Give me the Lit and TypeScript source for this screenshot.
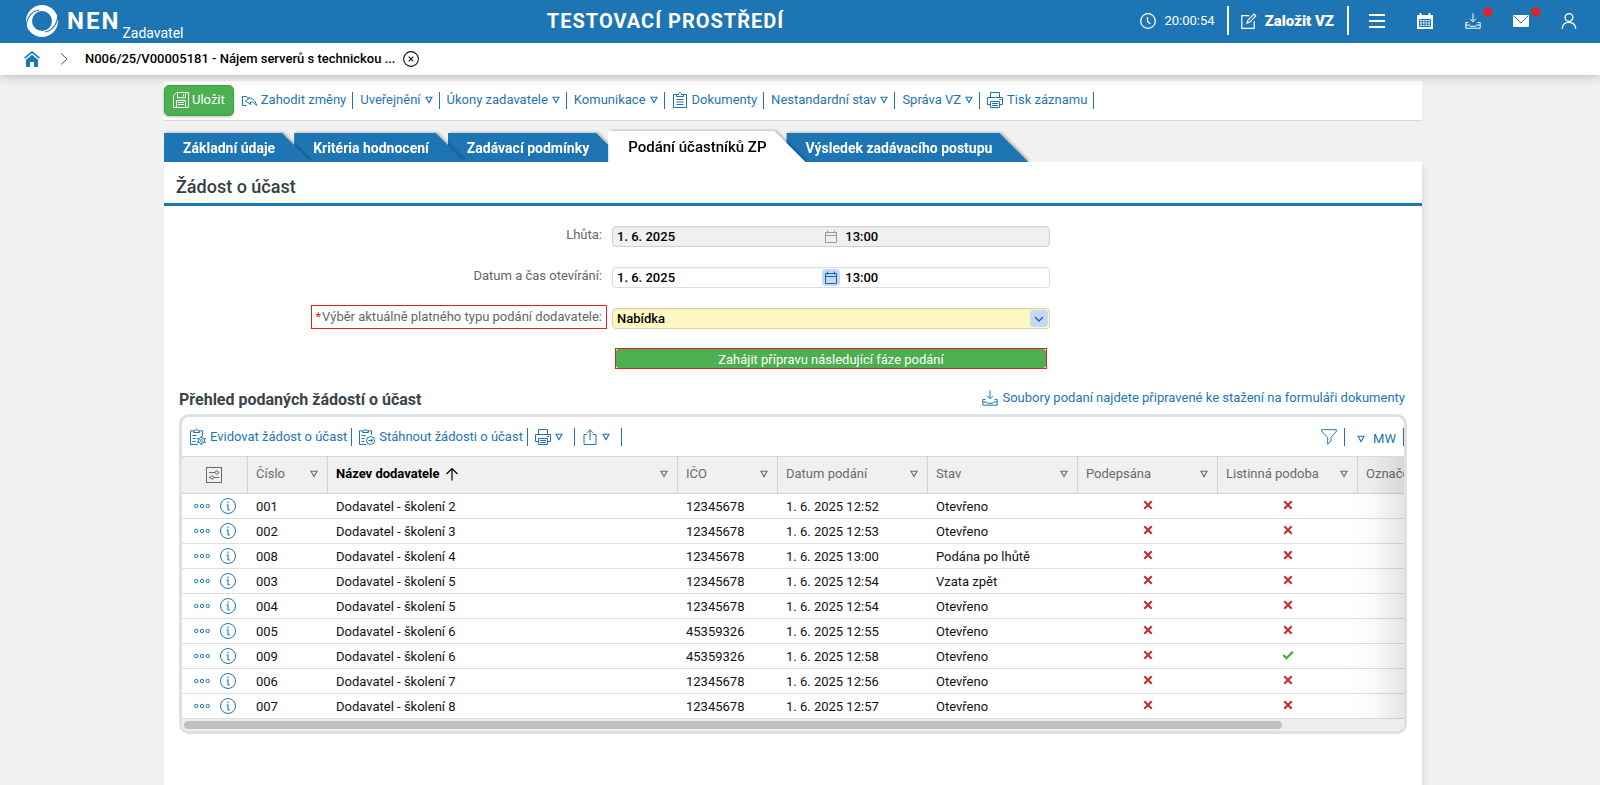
import { LitElement, html, css, svg, nothing } from "lit";
import { customElement } from "lit/decorators.js";
import { classMap } from "lit/directives/class-map.js";

const stroke = (body: unknown, cls = "icon") =>
  html`<svg class=${cls} viewBox="0 0 16 16" fill="none" stroke="currentColor" stroke-width="1" aria-hidden="true">${body}</svg>`;

const icons = {
  clock: svg`<circle cx="8" cy="8" r="7.3" stroke-width="1.3"/><path d="M7.5 4v4.2l2.8 2.9" stroke-width="1.3"/>`,
  edit: svg`<path d="M8.5 2.7H.8v12.6h12.4V8M6 10.3l.9-3.1L13 1.100l1.900 1.900-6.100 6.100z" stroke-width="1.2"/>`,
  menu: svg`<path d="M0 2h16M0 8h16M0 14h16" stroke-width="2.2"/>`,
  calendarFull: svg`<path d="M0 2h16v14H0z" fill="currentColor" stroke="none"/><path d="M3.500 0v4M12.500 0v4" stroke-width="2"/><path d="M2.500 6.500h11v7h-11zM2.500 8.800h11M2.500 11.200h11M5.300 6.500v7M8 6.500v7M10.700 6.500v7" stroke="#1e75b4"/>`,
  download: svg`<path d="M8 .5v8M5 5.800l3 3 3-3M3.500 9.500H.8v5.700h14.400V9.500h-2.700M1 12h3.500l1 1.300h5l1-1.300H15"/>`,
  mail: svg`<rect x="0" y="2" width="16" height="12" rx="1" fill="currentColor" stroke="none"/><path d="M1 3l7 7 7-7" stroke="#1e75b4"/>`,
  user: svg`<circle cx="8" cy="4.500" r="3.900" stroke-width="1.300"/><path d="M1.300 16c0-4 2.500-6.600 6.700-6.600s6.700 2.600 6.700 6.600" stroke-width="1.300"/>`,
  home: svg`<path d="M8 3.800l6 5V16h-4v-5H6v5H2V8.800z" fill="currentColor" stroke="none"/><path d="M.6 7.200L8 1.200l7.400 6" stroke-width="1.700"/>`,
  chevron: svg`<path d="M5 2.500l6 5.500-6 5.500"/>`,
  close: svg`<circle cx="8" cy="8" r="7.400" stroke-width="1.100"/><path d="M5.700 5.700l4.600 4.600M10.300 5.700l-4.600 4.600" stroke-width="1.100"/>`,
  save: svg`<path d="M3.500.5h12v15H.5V3.500zM4.500.8v5h8v-5M10.500 2v2.500M3.500 15.500v-7h9v7M5 10.500h6M5 12.500h6"/>`,
  undo: svg`<path d="M1.500 13.500h4M1.500 13.500V4.500h3.800l1 1.500c4.500-.7 8 2 9.200 7.500-1.500-2.500-3.600-3.800-6-3.500v2.500L4.500 8.800 8.500 6"/>`,
  clipboard: svg`<path d="M4.500 2.500h-3v13h13v-13h-3M4.500 4.500v-2h2c0-2.400 3-2.400 3 0h2v2zM4.500 7.500h7M4.500 10h7M4.500 12.500h7"/>`,
  printer: svg`<path d="M3.500 5V.5h9V5M3.500 12.500h-3v-7h15v7h-3M3.500 9.500h9v6h-9zM5 11.500h6M5 13.500h6M12 7.500h2"/>`,
  clipGear: svg`<path d="M3.500 1.800H.5v13.700h7M9.500 1.800h3v5M3.500 3.500V1.800h1.700C5.200-.2 7.900-.2 7.900 1.800h1.600v1.700zM2.500 6.500h4M2.500 9.500h3M2.500 12.500h3"/><circle cx="11.500" cy="11.500" r="3"/><circle cx="11.500" cy="11.500" r="1"/><path d="M11.500 7v1.500M11.500 14.500V16M7.300 9.300l1.500.8M14.200 12.900l1.500.8M7.300 13.700l1.500-.8M14.200 10.100l1.500-.8" stroke-width="1.400"/>`,
  clipArrow: svg`<path d="M3.500 1.800H.5v13.700h7M9.500 1.800h3v4M3.500 3.500V1.800h1.700C5.200-.2 7.900-.2 7.900 1.800h1.600v1.700zM2.500 6.500h4M2.500 9.500h3M2.500 12.500h3"/><circle cx="11.500" cy="11.500" r="4"/><path d="M9.300 11.500h4M11.800 9.700l1.800 1.800-1.800 1.800"/>`,
  share: svg`<path d="M5 5.500H2v10h12v-10h-3M8 11V.8M5 3.800l3-3 3 3"/>`,
  filter: svg`<path d="M.6.700h14.800v1.500L10 8.500V12l-3.300 3.300V8.500L.6 2.200z"/>`,
  sliders: svg`<rect x=".5" y=".5" width="15" height="15"/><path d="M3 5.500h6M12.500 5.500h.8M3 10.500h1.500M8 10.500h5.300"/><circle cx="10.800" cy="5.500" r="1.600"/><circle cx="6.200" cy="10.500" r="1.600"/>`,
  up: svg`<path d="M8 14.500V2.500M2.500 8L8 2.500 13.500 8" stroke-width="1.200"/>`,
  dots: svg`<circle cx="2.300" cy="8" r="1.700"/><circle cx="8" cy="8" r="1.700"/><circle cx="13.700" cy="8" r="1.700"/>`,
  info: svg`<circle cx="8" cy="8" r="7.500"/><path d="M8 3.500v1.800M6.500 7H8v4.200c0 .8.800.8 1.700.5" stroke-width="1.100"/>`,
  cross: svg`<path d="M4.300 4.300l7.400 7.400M11.700 4.300l-7.400 7.400" stroke="#c92a2e" stroke-width="2.100"/>`,
  check: svg`<path d="M3.300 8l3.200 3.200L12.800 4.800" stroke="#35b235" stroke-width="2.300"/>`,
  calendar: svg`<path d="M2.500 3.500h11v10h-11zM2.500 6.500h11M4.500 1.500v3M11.500 1.500v3"/>`,
  down: svg`<path d="M4 6l4 4 4-4" stroke-width="1.300"/>`,
};

const caret = html`<svg class="caret" viewBox="0 0 8 8" fill="none" stroke="currentColor" stroke-width="1.100" aria-hidden="true"><path d="M1 1.200h6L4 6.600z"/></svg>`;

interface Action { label: string; icon?: unknown; menu?: boolean }

const actions: Action[] = [
  { label: "Zahodit změny", icon: icons.undo },
  { label: "Uveřejnění", menu: true },
  { label: "Úkony zadavatele", menu: true },
  { label: "Komunikace", menu: true },
  { label: "Dokumenty", icon: icons.clipboard },
  { label: "Nestandardní stav", menu: true },
  { label: "Správa VZ", menu: true },
  { label: "Tisk záznamu", icon: icons.printer },
];

const tabs = ["Základní údaje", "Kritéria hodnocení", "Zadávací podmínky", "Podání účastníků ZP", "Výsledek zadávacího postupu"];
const activeTab = 3;

const columns = [
  { label: "Číslo", cls: "w-num" },
  { label: "Název dodavatele", cls: "w-name", sorted: true },
  { label: "IČO", cls: "w-ico" },
  { label: "Datum podání", cls: "w-date" },
  { label: "Stav", cls: "w-date" },
  { label: "Podepsána", cls: "w-flag" },
  { label: "Listinná podoba", cls: "w-flag" },
  { label: "Označení", cls: "w-last" },
];

const rows: [string, string, string, string, string, boolean, boolean][] = [
  ["001", "Dodavatel - školení 2", "12345678", "1. 6. 2025 12:52", "Otevřeno", false, false],
  ["002", "Dodavatel - školení 3", "12345678", "1. 6. 2025 12:53", "Otevřeno", false, false],
  ["008", "Dodavatel - školení 4", "12345678", "1. 6. 2025 13:00", "Podána po lhůtě", false, false],
  ["003", "Dodavatel - školení 5", "12345678", "1. 6. 2025 12:54", "Vzata zpět", false, false],
  ["004", "Dodavatel - školení 5", "12345678", "1. 6. 2025 12:54", "Otevřeno", false, false],
  ["005", "Dodavatel - školení 6", "45359326", "1. 6. 2025 12:55", "Otevřeno", false, false],
  ["009", "Dodavatel - školení 6", "45359326", "1. 6. 2025 12:58", "Otevřeno", false, true],
  ["006", "Dodavatel - školení 7", "12345678", "1. 6. 2025 12:56", "Otevřeno", false, false],
  ["007", "Dodavatel - školení 8", "12345678", "1. 6. 2025 12:57", "Otevřeno", false, false],
];

const base = css`
  * { box-sizing: border-box; }
  button, input, select { font: inherit; color: inherit; margin: 0; padding: 0; border: 0; background: none; }
  button { cursor: pointer; white-space: nowrap; }
  a { color: inherit; text-decoration: none; }
  .icon { width: 16px; height: 16px; flex: none; display: block; overflow: visible; }
  .caret { width: 8px; height: 8px; flex: none; display: block; }
`;

@customElement("nen-header")
export class NenHeader extends LitElement {
  static styles = [base, css`
    :host { display: block; position: relative; z-index: 2; box-shadow: 0 1px 10px rgba(0, 0, 0, .25); }
    .bar { display: flex; justify-content: space-between; align-items: center; height: 43px; padding: 0 23px 2px 26px; background: #1e75b4; color: #fff; }
    .brand { display: flex; align-items: center; gap: 9px; padding-right: 7px; }
    .logo { width: 32px; height: 32px; display: block; }
    .name { display: flex; align-items: flex-end; gap: 2px; }
    .nen { font-size: 24px; line-height: 32px; font-weight: 700; letter-spacing: 2px; }
    .role { font-size: 14px; line-height: 16px; margin-bottom: -4px; }
    .env { font-size: 20px; line-height: 24px; font-weight: 700; letter-spacing: 1px; white-space: nowrap; margin: 0; }
    .tools { display: flex; align-items: center; }
    .time { display: flex; align-items: center; gap: 8px; padding-right: 12px; font-size: 13px; }
    .create { display: flex; align-items: center; gap: 8px; padding: 0 13px 0 12px; height: 29px; border: solid #fff; border-width: 0 2px; font-size: 15px; font-weight: 900; }
    .nav { display: flex; gap: 32px; padding-left: 20px; }
    .nav-btn { position: relative; width: 16px; height: 16px; }
    .alert { position: absolute; top: -6px; right: -12px; width: 10px; height: 10px; border-radius: 50%; background: #cb2c30; }
    .crumbs { display: flex; align-items: center; height: 32px; padding-left: 24px; background: #fff; }
    .home { color: #1e75b4; }
    .sep { width: 16px; height: 16px; margin: 0 13px 0 16px; color: #555; }
    .here { font-size: 13px; font-weight: 500; color: #000; margin-right: 8px; white-space: nowrap; }
    .close { color: #111; }
  `];
  render() {
    return html`
      <header class="bar">
        <div class="brand">
          <svg class="logo" viewBox="0 0 32 32" aria-hidden="true">
            <circle cx="16" cy="16" r="13" fill="none" stroke="#fff" stroke-width="6"/>
            <path d="M0 22C1 12 5 6.500 13 5M32 10c-1 10-5 15.500-13 17" fill="none" stroke="#1e75b4" stroke-width="1.200"/>
          </svg>
          <div class="name"><span class="nen">NEN</span><span class="role">Zadavatel</span></div>
        </div>
        <p class="env">TESTOVACÍ PROSTŘEDÍ</p>
        <div class="tools">
          <span class="time">${stroke(icons.clock)}20:00:54</span>
          <button class="create">${stroke(icons.edit)}Založit VZ</button>
          <nav class="nav">
            <button class="nav-btn" aria-label="Menu">${stroke(icons.menu)}</button>
            <button class="nav-btn" aria-label="Kalendář">${stroke(icons.calendarFull)}</button>
            <button class="nav-btn" aria-label="Stažené soubory">${stroke(icons.download)}<span class="alert"></span></button>
            <button class="nav-btn" aria-label="Zprávy">${stroke(icons.mail)}<span class="alert"></span></button>
            <button class="nav-btn" aria-label="Uživatel">${stroke(icons.user)}</button>
          </nav>
        </div>
      </header>
      <nav class="crumbs">
        <a class="home" href="#" aria-label="Domů">${stroke(icons.home)}</a>
        <span class="sep">${stroke(icons.chevron)}</span>
        <a class="here" href="#">N006/25/V00005181 - Nájem serverů s technickou ...</a>
        <button class="close" aria-label="Zavřít">${stroke(icons.close)}</button>
      </nav>`;
  }
}

@customElement("nen-grid")
export class NenGrid extends LitElement {
  static styles = [base, css`
    :host { display: block; border: 3px solid #dee0e1; border-radius: 10px; overflow: hidden; background: #fff; }
    .tools { display: flex; align-items: center; justify-content: space-between; height: 40px; padding-left: 1px; color: #1e75b4; border-bottom: 1px solid #d8d8d8; font-size: 13px; }
    .group { display: flex; align-items: center; }
    .tool { display: flex; align-items: center; gap: 4px; height: 18px; padding-right: 4px; margin-left: 7px; border-right: 1px solid currentColor; }
    .icon-only { padding-right: 11px; }
    .view { gap: 8px; padding: 4px 7px 0 5px; }
    .filter { padding-right: 7px; }
    .frame { position: relative; overflow: hidden; }
    .fade { position: absolute; top: 0; bottom: 0; right: 0; width: 56px; background: linear-gradient(to right, rgba(0, 0, 0, 0), rgba(0, 0, 0, .02) 45%, rgba(0, 0, 0, .1)); pointer-events: none; }
    .table { table-layout: fixed; width: 1358px; border-collapse: separate; border-spacing: 0; font-size: 13px; color: #111; }
    .w-tools { width: 66px; } .w-num { width: 80px; } .w-name { width: 350px; } .w-ico { width: 100px; }
    .w-date { width: 150px; } .w-flag { width: 140px; } .w-last { width: 182px; }
    th { height: 37px; padding: 0 9px 3px 8px; text-align: left; font-weight: 400; color: #6b6b6b; background: #f0f0f0; border: solid #d3d3d3; border-width: 0 1px 1px 0; }
    td { height: 25px; padding: 1px 8px 0; border-bottom: 1px solid #dedede; line-height: 16px; white-space: nowrap; }
    .head { display: flex; align-items: center; gap: 4px; }
    .head .caret { margin-left: auto; color: #6b6b6b; }
    .sorted { font-weight: 700; color: #000; }
    .tune { width: 100%; justify-content: center; padding-top: 3px; }
    .ops { display: flex; gap: 10px; padding-left: 4px; margin-top: -1px; color: #1e75b4; }
    .flag { display: flex; justify-content: center; margin-top: -3px; }
    .track { height: 12px; padding: 2px 0 2px 2px; background: #eee; }
    .thumb { height: 8px; width: 90%; border-radius: 4px; background: #c1c1c1; }
  `];
  private mark(ok: boolean) {
    return html`<span class="flag" role="img" aria-label=${ok ? "Ano" : "Ne"}>${stroke(ok ? icons.check : icons.cross)}</span>`;
  }
  render() {
    return html`
      <div class="tools">
        <div class="group">
          <button class="tool">${stroke(icons.clipGear)}Evidovat žádost o účast</button>
          <button class="tool">${stroke(icons.clipArrow)}Stáhnout žádosti o účast</button>
          <button class="tool icon-only" aria-label="Tisk">${stroke(icons.printer)}${caret}</button>
          <button class="tool icon-only" aria-label="Export">${stroke(icons.share)}${caret}</button>
        </div>
        <div class="group">
          <button class="tool filter" aria-label="Filtr">${stroke(icons.filter)}</button>
          <button class="tool view">${caret}MW</button>
        </div>
      </div>
      <div class="frame">
        <table class="table">
          <thead>
            <tr>
              <th class="w-tools"><button class="head tune" aria-label="Nastavení sloupců">${stroke(icons.sliders)}</button></th>
              ${columns.map((c) => html`<th class=${c.cls}>
                <span class=${classMap({ head: true, sorted: !!c.sorted })}>${c.label}${c.sorted ? stroke(icons.up) : nothing}${caret}</span></th>`)}
            </tr>
          </thead>
          <tbody>
            ${rows.map((r) => html`<tr>
              <td><span class="ops">${stroke(icons.dots)}${stroke(icons.info)}</span></td>
              <td>${r[0]}</td><td>${r[1]}</td><td>${r[2]}</td><td>${r[3]}</td><td>${r[4]}</td>
              <td>${this.mark(r[5])}</td><td>${this.mark(r[6])}</td><td></td>
            </tr>`)}
          </tbody>
        </table>
        <div class="fade"></div>
      </div>
      <div class="track"><div class="thumb"></div></div>`;
  }
}

@customElement("app-root")
export class AppRoot extends LitElement {
  static styles = [base, css`
    :host { display: flex; flex-direction: column; min-height: 100vh; background: #f1f1f1; font-family: Roboto, "Liberation Sans", sans-serif; font-size: 13px; line-height: 16px; color: #111; }
    .page { flex: 1; display: flex; flex-direction: column; padding: 6px 178px 0 164px; }
    .actions { display: flex; align-items: center; height: 40px; padding-bottom: 1px; background: #fff; border-bottom: 1px solid #d8d8d8; color: #1e75b4; }
    .save { display: flex; align-items: center; gap: 3px; height: 31px; padding: 0 8px; border: 1px solid #43a047; border-radius: 5px; background: #4caf50; color: #fff; box-shadow: 0 1px 3px rgba(0, 0, 0, .25); }
    .action { display: flex; align-items: center; gap: 4px; height: 17px; padding-right: 6px; margin-left: 7px; border-right: 1px solid currentColor; }
    .tabs { display: flex; align-items: flex-end; height: 41px; padding-top: 8px; overflow: hidden; }
    .tab { position: relative; height: 29px; padding: 1px 19px 0; color: #fff; font-size: 14px; font-weight: 700; filter: drop-shadow(2px -1px 1px rgba(0, 0, 0, .2)); }
    .tab::before { content: ""; position: absolute; z-index: -1; top: 0; bottom: 0; left: 0; right: -17px; background: #1e75b4; clip-path: polygon(0 0, calc(100% - 29px) 0, 100% 100%, 0 100%); }
    .tab:nth-child(1) { z-index: 5; } .tab:nth-child(2) { z-index: 4; } .tab:nth-child(3) { z-index: 3; } .tab:nth-child(5) { z-index: 1; }
    .tab.active { z-index: 9; height: 31px; padding: 0 20px; color: #000; font-size: 15px; font-weight: 500; }
    .tab.active::before { right: -19px; background: #fff; clip-path: polygon(0 0, calc(100% - 31px) 0, 100% 100%, 0 100%); }
    .panel { flex: 1; background: #fff; box-shadow: 4px 4px 6px rgba(0, 0, 0, .06); }
    .title { margin: 0; padding: 9px 12px 0; font-size: 18px; line-height: 24px; height: 44px; display: flex; align-items: center; font-weight: 500; color: #343d45; border-bottom: 3px solid #1e75b4; }
    .form { display: grid; grid-template-columns: 448fr 438fr 372fr; row-gap: 17px; padding-top: 17px; }
    .label { grid-column: 1; justify-self: end; align-self: start; display: flex; gap: 1px; margin-right: 5px; padding: 3px 4px 3px 3px; border: 1px solid transparent; line-height: 16px; color: #666; white-space: nowrap; }
    .label.marked { border-color: #e02020; }
    .star { color: #d03020; }
    .field { grid-column: 2; align-self: end; display: flex; align-items: center; height: 21px; border: 1px solid #dcdcdc; border-radius: 4px; background: #fff; font-weight: 500; box-shadow: inset 0 1px 2px rgba(0, 0, 0, .05); }
    .field.off { background: #f0f0f0; border-color: #d0d0d0; }
    .field.yellow { background: #fff8c4; border-color: #ddd6a8; }
    .date { width: 48%; padding-left: 4px; height: 19px; color: #000; min-width: 0; }
    .time { flex: 1; padding-left: 5px; height: 19px; color: #000; min-width: 0; }
    .pick { display: flex; align-items: center; justify-content: center; width: 18px; height: 17px; border-radius: 4px; color: #999; }
    .pick.on { background: #c3daf5; color: #1a5fae; }
    .kind { flex: 1; appearance: none; padding-left: 4px; height: 19px; color: #000; outline: none; }
    .field.yellow .pick { margin-right: 1px; pointer-events: none; }
    .start { grid-column: 2; margin: 2px 3px 0; border: 1px solid #e02020; display: flex; }
    .start-btn { flex: 1; height: 19px; padding-top: 2px; border-radius: 3px; background: #4caf50; color: #fff; }
    .overview { padding: 19px 15px 0; }
    .caption { display: flex; justify-content: space-between; align-items: center; height: 26px; padding-bottom: 3px; }
    .sub { margin: 0; font-size: 16px; line-height: 20px; padding-top: 1px; font-weight: 700; color: #3a444c; }
    .files { display: flex; align-items: center; gap: 4px; color: #1e75b4; padding: 0 2px 3px 0; }
  `];
  render() {
    return html`
      <nen-header></nen-header>
      <main class="page">
        <div class="actions">
          <button class="save">${stroke(icons.save)}Uložit</button>
          ${actions.map((a) => html`<button class="action">${a.icon ? stroke(a.icon) : nothing}${a.label}${a.menu ? caret : nothing}</button>`)}
        </div>
        <div class="tabs" role="tablist">
          ${tabs.map((t, i) => html`<button role="tab" aria-selected=${i === activeTab} class=${classMap({ tab: true, active: i === activeTab })}>${t}</button>`)}
        </div>
        <section class="panel">
          <h1 class="title">Žádost o účast</h1>
          <form class="form">
            <label class="label" for="deadline">Lhůta:</label>
            <div class="field off">
              <input class="date" id="deadline" value="1. 6. 2025" disabled>
              <span class="pick">${stroke(icons.calendar)}</span>
              <input class="time" aria-label="Lhůta, čas" value="13:00" disabled>
            </div>
            <label class="label" for="opening">Datum a čas otevírání:</label>
            <div class="field">
              <input class="date" id="opening" value="1. 6. 2025">
              <button type="button" class="pick on" aria-label="Vybrat datum">${stroke(icons.calendar)}</button>
              <input class="time" aria-label="Čas otevírání" value="13:00">
            </div>
            <label class="label marked" for="kind"><span class="star">*</span>Výběr aktuálně platného typu podání dodavatele:</label>
            <div class="field yellow">
              <select class="kind" id="kind"><option>Nabídka</option></select>
              <span class="pick on">${stroke(icons.down)}</span>
            </div>
            <div class="start"><button type="button" class="start-btn">Zahájit přípravu následující fáze podání</button></div>
          </form>
          <div class="overview">
            <div class="caption">
              <h2 class="sub">Přehled podaných žádostí o účast</h2>
              <a class="files" href="#">${stroke(icons.download)}Soubory podaní najdete připravené ke stažení na formuláři dokumenty</a>
            </div>
            <nen-grid></nen-grid>
          </div>
        </section>
      </main>`;
  }
}
